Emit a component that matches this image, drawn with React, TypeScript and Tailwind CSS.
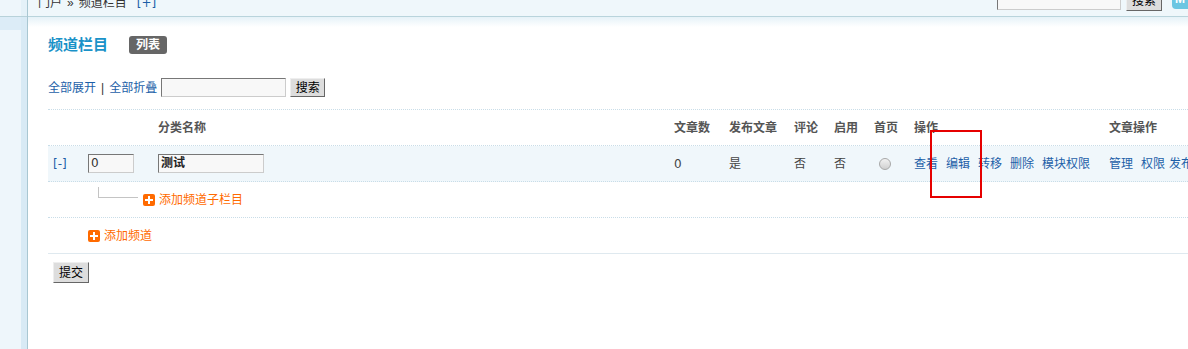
import React from "react";

const font = { fontFamily: '"Liberation Sans", "Noto Sans CJK SC", sans-serif' };

function Plus() {
  return (
    <span className="inline-flex w-[12px] h-[12px] rounded-[2px] bg-[#ff6a00] items-center justify-center shrink-0">
      <svg width="8" height="8" viewBox="0 0 8 8">
        <rect x="3" y="0" width="2" height="8" fill="#fff" />
        <rect x="0" y="3" width="8" height="2" fill="#fff" />
      </svg>
    </span>
  );
}

const cols = ["w-[35px]", "w-[70px]", "w-[516px]", "w-[55px]", "w-[65px]", "w-[40px]", "w-[40px]", "w-[40px]", "w-[195px]", "w-[120px]"];

export default function App() {
  const link = "text-[#1d5fa8]";
  const latin = "font-['DejaVu_Sans',sans-serif]";
  return (
    <div className="w-[1188px] h-[349px] overflow-hidden flex bg-white text-[12px] text-[#333]" style={font}>
      {/* sidebar */}
      <div className="w-[28px] h-full flex border-r border-[#a9c7d2] shrink-0">
        <div className="w-[21px] flex flex-col">
          <div className="h-[16px] bg-[#eef6fb] border-b border-[#b8d2da] box-content" />
          <div className="h-[13px] bg-[#dcecf7]" />
          <div className="flex-1 bg-[#eef6fb]" />
        </div>
        <div className="w-[6px] flex flex-col">
          <div className="h-[16px] bg-[#e4f1f8] border-b border-[#b8d2da] box-content" />
          <div className="flex-1 bg-[#d8eaf5]" />
        </div>
      </div>

      {/* main */}
      <div className="flex-1 flex flex-col min-w-0 relative">
        <div className="h-[16px] bg-[#eff7fb] border-b border-[#b9d4dc] box-content flex items-start overflow-hidden">
          <div className="pl-[10px] mt-[-3px] leading-[12px] whitespace-nowrap text-[#333] flex-1 flex items-start">
            <span>门户</span>
            <span className="ml-[5px]">»</span>
            <span className="ml-[5px]">频道栏目</span>
            <span className={`${link} ${latin} ml-[10px]`}>[+]</span>
          </div>
          <div className="flex items-start mt-[-10px] shrink-0">
            <div className="w-[124px] h-[20px] bg-[#f8f8f8] border border-t-[#777] border-l-[#777] border-b-[#ccc] border-r-[#ccc]" />
            <div className="ml-[5px] w-[36px] h-[21px] bg-[#ddd] border border-t-[#eee] border-l-[#eee] border-b-[#666] border-r-[#666] flex items-center justify-center text-black leading-[12px]">
              搜索
            </div>
            <div className="ml-[10px] w-[16px] h-[19px] bg-[#6cc6e2] rounded-l-[4px] overflow-hidden text-white font-bold leading-[19px] pl-[3px]">
              M
            </div>
          </div>
        </div>
        <div className="h-[10px] bg-gradient-to-b from-[#e6f2f8] to-white" />

        <div className="pl-[20px] mt-[9px] flex flex-col">
          {/* title */}
          <div className="flex items-center h-[18px]">
            <span className="text-[15px] font-bold text-[#1a92c8] leading-[18px]">频道栏目</span>
            <span className="ml-[21px] h-[18px] px-[7px] bg-[#666] rounded-[3px] text-white font-bold leading-[18px]">列表</span>
          </div>

          {/* search row */}
          <div className="flex items-center h-[19px] mt-[24px] whitespace-nowrap">
            <span className={link}>全部展开</span>
            <span className="mx-[5px] text-[#333]">|</span>
            <span className={link}>全部折叠</span>
            <div className="ml-[4px] w-[125px] h-[19px] bg-[#f8f8f8] border border-t-[#777] border-l-[#777] border-b-[#ccc] border-r-[#ccc]" />
            <div className="ml-[4px] w-[35px] h-[19px] bg-[#ddd] border border-t-[#eee] border-l-[#eee] border-b-[#666] border-r-[#666] flex items-center justify-center text-black leading-[12px]">
              搜索
            </div>
          </div>

          {/* table */}
          <div className="mt-[12px] border-t border-dotted border-[#c9dde8] whitespace-nowrap">
            {/* header row */}
            <div className="flex h-[36px] border-b border-dotted border-[#c9dde8] items-center font-bold text-[#555]">
              <div className={`${cols[0]} shrink-0`} />
              <div className={`${cols[1]} shrink-0`} />
              <div className={`${cols[2]} shrink-0 pl-[5px]`}>分类名称</div>
              <div className={`${cols[3]} shrink-0 pl-[5px]`}>文章数</div>
              <div className={`${cols[4]} shrink-0 pl-[5px]`}>发布文章</div>
              <div className={`${cols[5]} shrink-0 pl-[5px]`}>评论</div>
              <div className={`${cols[6]} shrink-0 pl-[5px]`}>启用</div>
              <div className={`${cols[7]} shrink-0 pl-[5px]`}>首页</div>
              <div className={`${cols[8]} shrink-0 pl-[5px]`}>操作</div>
              <div className={`${cols[9]} shrink-0 pl-[5px]`}>文章操作</div>
            </div>

            {/* data row */}
            <div className="flex h-[36px] border-b border-dotted border-[#c9dde8] items-center bg-[#f0f7fb] text-[#444]">
              <div className={`${cols[0]} shrink-0 pl-[5px] ${link} ${latin}`}>[-]</div>
              <div className={`${cols[1]} shrink-0 pl-[5px]`}>
                <div className={`w-[46px] h-[19px] bg-[#f8f8f8] border border-t-[#777] border-l-[#777] border-b-[#ccc] border-r-[#ccc] leading-[17px] pl-[2px] text-[#333] ${latin}`}>0</div>
              </div>
              <div className={`${cols[2]} shrink-0 pl-[5px]`}>
                <div className="w-[106px] h-[19px] bg-[#f8f8f8] border border-t-[#777] border-l-[#777] border-b-[#ccc] border-r-[#ccc] leading-[17px] pl-[2px] font-bold text-[#222]">测试</div>
              </div>
              <div className={`${cols[3]} shrink-0 pl-[5px] ${latin}`}>0</div>
              <div className={`${cols[4]} shrink-0 pl-[5px]`}>是</div>
              <div className={`${cols[5]} shrink-0 pl-[5px]`}>否</div>
              <div className={`${cols[6]} shrink-0 pl-[5px]`}>否</div>
              <div className={`${cols[7]} shrink-0 pl-[10px] flex items-center`}>
                <span className="w-[12px] h-[12px] rounded-full border border-[#a8a8a8] bg-gradient-to-b from-[#f2f2f2] to-[#d0d0d0]" />
              </div>
              <div className={`${cols[8]} shrink-0 pl-[5px] ${link}`}>
                <span className="mr-[8px]">查看</span>
                <span className="mr-[8px]">编辑</span>
                <span className="mr-[8px]">转移</span>
                <span className="mr-[8px]">删除</span>
                <span>模块权限</span>
              </div>
              <div className={`${cols[9]} shrink-0 pl-[5px] ${link}`}>
                <span className="mr-[8px]">管理</span>
                <span className="mr-[4px]">权限</span>
                <span>发布</span>
              </div>
            </div>

            {/* sub row */}
            <div className="flex h-[36px] border-b border-dotted border-[#c9dde8] items-center">
              <div className="w-[50px] shrink-0 self-start pt-[5px]">
                <div className="ml-[50px] w-[40px] h-[11px] border-l border-b border-[#c4c4c4]" />
              </div>
              <div className="ml-[45px] flex items-center">
                <Plus />
                <span className="ml-[4px] text-[#ff6a00]">添加频道子栏目</span>
              </div>
            </div>

            {/* add channel row */}
            <div className="flex h-[36px] items-center border-b border-[#dfe9ef]">
              <div className="ml-[40px] flex items-center">
                <Plus />
                <span className="ml-[4px] text-[#ff6a00]">添加频道</span>
              </div>
            </div>
          </div>

          <div className="mt-[8px] ml-[5px] w-[36px] h-[21px] bg-[#ddd] border border-t-[#eee] border-l-[#eee] border-b-[#666] border-r-[#666] flex items-center justify-center text-black leading-[12px]">
            提交
          </div>
        </div>

        {/* highlight box */}
        <div className="absolute left-[902px] top-[130px] w-[52px] h-[68px] border-2 border-[#e60000]" />
      </div>
    </div>
  );
}
